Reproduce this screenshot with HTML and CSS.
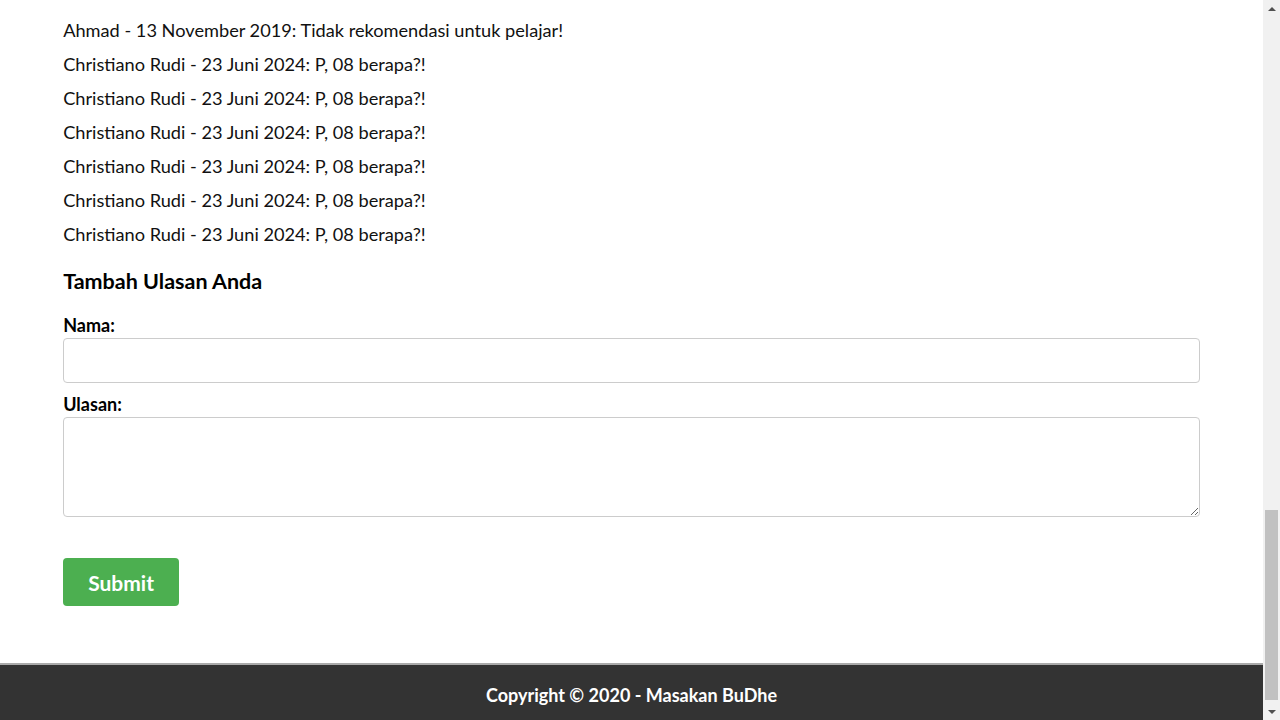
FILE: index.html
```html
<!DOCTYPE html>
<html lang="id">
<head>
<meta charset="utf-8">
<title>Masakan BuDhe - Ulasan</title>
<link rel="stylesheet" href="styles.css">
</head>
<body>
<div class="viewport">
  <div class="page">
    <main class="main">
      <section class="reviews">
        <p>Ahmad - 13 November 2019: Tidak rekomendasi untuk pelajar!</p>
        <p>Christiano Rudi - 23 Juni 2024: P, 08 berapa?!</p>
        <p>Christiano Rudi - 23 Juni 2024: P, 08 berapa?!</p>
        <p>Christiano Rudi - 23 Juni 2024: P, 08 berapa?!</p>
        <p>Christiano Rudi - 23 Juni 2024: P, 08 berapa?!</p>
        <p>Christiano Rudi - 23 Juni 2024: P, 08 berapa?!</p>
        <p>Christiano Rudi - 23 Juni 2024: P, 08 berapa?!</p>
      </section>
      <h3 class="form-title">Tambah Ulasan Anda</h3>
      <form class="review-form">
        <label class="label" for="nama">Nama:</label>
        <input class="field" type="text" id="nama">
        <label class="label label-second" for="ulasan">Ulasan:</label>
        <textarea class="field area" id="ulasan"></textarea>
        <button class="submit" type="button">Submit</button>
      </form>
    </main>
    <footer class="footer">Copyright © 2020 - Masakan BuDhe</footer>
  </div>
  <div class="scrollbar" aria-hidden="true">
    <div class="sb-btn"><svg width="8" height="4" viewBox="0 0 8 4"><polygon points="0,4 8,4 4,0" fill="#505050"/></svg></div>
    <div class="sb-track"><div class="sb-thumb"></div></div>
    <div class="sb-btn"><svg width="8" height="4" viewBox="0 0 8 4"><polygon points="0,0 8,0 4,4" fill="#505050"/></svg></div>
  </div>
</div>
</body>
</html>
```
FILE: styles.css
```css
body {
  margin: 0;
  font-family: Lato, "Open Sans", sans-serif;
  color: #111;
  background: #fff;
}
.viewport {
  display: flex;
  height: 100vh;
  overflow: hidden;
}
.page {
  flex: 1;
  display: flex;
  flex-direction: column;
  min-width: 0;
}
.main {
  flex: 1;
  width: 90%;
  margin: 0 auto;
  padding-top: 13px;
}
.reviews p {
  margin: 0;
  font-size: 18.2px;
  line-height: 34px;
}
.form-title {
  margin: 16px 0 0;
  font-size: 21.5px;
  line-height: 28px;
  font-weight: 700;
  color: #000;
}
.review-form {
  display: flex;
  flex-direction: column;
  margin-top: 19px;
}
.label {
  font-size: 18px;
  line-height: 22px;
  font-weight: 700;
  color: #000;
  margin-bottom: 2px;
}
.label-second { margin-top: 10px; }
.field {
  box-sizing: border-box;
  width: 100%;
  height: 45px;
  margin: 0;
  border: 1px solid #ccc;
  border-radius: 4px;
  font: inherit;
}
.area { height: 100px; }
.submit {
  align-self: flex-start;
  margin-top: 41px;
  height: 48px;
  padding: 0 25px;
  border: none;
  border-radius: 4px;
  background: #4caf50;
  color: #fff;
  font-family: inherit;
  font-size: 21px;
  font-weight: 700;
}
.footer {
  height: 57px;
  box-sizing: border-box;
  background: #333;
  border-top: 2px solid #aaa;
  color: #fff;
  text-align: center;
  font-size: 18px;
  font-weight: 700;
  line-height: 22px;
  padding-top: 19px;
}
.scrollbar {
  width: 17px;
  flex: none;
  background: #f1f1f1;
  display: flex;
  flex-direction: column;
}
.sb-btn {
  height: 17px;
  display: flex;
  align-items: center;
  justify-content: center;
}
.sb-track {
  flex: 1;
  display: flex;
  flex-direction: column;
  justify-content: flex-end;
}
.sb-thumb {
  height: 190px;
  margin: 0 2px 3px;
  background: #c1c1c1;
}
```
